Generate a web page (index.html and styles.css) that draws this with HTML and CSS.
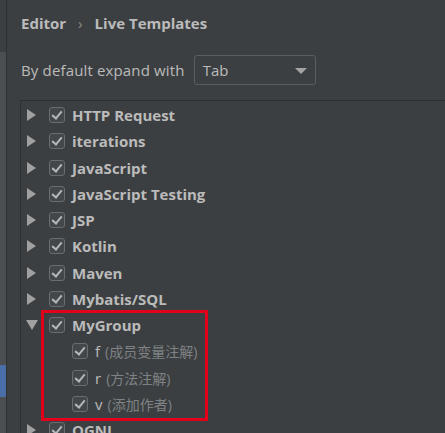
FILE: index.html
```html
<!DOCTYPE html>
<html>
<head>
<meta charset="utf-8">
<link rel="stylesheet" href="styles.css">
</head>
<body>
<div class="app">
  <div class="sidebar">
    <div class="sb-top"></div>
    <div class="sb-mid"></div>
    <div class="sb-sel"></div>
    <div class="sb-bot"></div>
  </div>
  <div class="divider"></div>
  <div class="main">
    <div class="crumbs"><span class="crumb">Editor</span><span class="sep">›</span><span class="crumb">Live Templates</span></div>
    <div class="expand">
      <span class="label">By default expand with</span>
      <div class="select"><span>Tab</span><span class="caret"></span></div>
    </div>
    <div class="tree">
      <div class="row"><span class="arrow"></span><span class="cb"></span><span class="name">HTTP Request</span></div>
      <div class="row"><span class="arrow"></span><span class="cb"></span><span class="name">iterations</span></div>
      <div class="row"><span class="arrow"></span><span class="cb"></span><span class="name">JavaScript</span></div>
      <div class="row"><span class="arrow"></span><span class="cb"></span><span class="name">JavaScript Testing</span></div>
      <div class="row"><span class="arrow"></span><span class="cb"></span><span class="name">JSP</span></div>
      <div class="row"><span class="arrow"></span><span class="cb"></span><span class="name">Kotlin</span></div>
      <div class="row"><span class="arrow"></span><span class="cb"></span><span class="name">Maven</span></div>
      <div class="row"><span class="arrow"></span><span class="cb"></span><span class="name">Mybatis/SQL</span></div>
      <div class="row"><span class="arrow open"></span><span class="cb"></span><span class="name">MyGroup</span></div>
      <div class="row child"><span class="cb"></span><span class="abbr">f</span><span class="desc">(成员变量注解)</span></div>
      <div class="row child"><span class="cb"></span><span class="abbr">r</span><span class="desc">(方法注解)</span></div>
      <div class="row child"><span class="cb"></span><span class="abbr">v</span><span class="desc">(添加作者)</span></div>
      <div class="row"><span class="arrow"></span><span class="cb"></span><span class="name">OGNL</span></div>
      <div class="highlight"></div>
    </div>
  </div>
</div>
</body>
</html>
```
FILE: styles.css
```css
html, body {
  margin: 0;
  padding: 0;
  background: #3c3f41;
  overflow: hidden;
}
body {
  width: 445px;
  height: 433px;
  font-family: "Open Sans", "Noto Sans CJK SC", sans-serif;
  color: #bbbbbb;
}
.app {
  display: flex;
  height: 433px;
}
.sidebar {
  width: 6px;
  display: flex;
  flex-direction: column;
  flex: none;
}
.sb-top { height: 52px; background: #3b3f43; flex: none; }
.sb-mid { height: 313px; background: #4b4f52; flex: none; }
.sb-sel { height: 32px; background: #4a6ea8; flex: none; }
.sb-bot { flex: 1; background: #4b4f52; }
.divider {
  width: 1px;
  background: #2e3032;
  flex: none;
}
.main {
  flex: 1;
  display: flex;
  flex-direction: column;
  min-height: 0;
}
.crumbs {
  flex: none;
  height: 46px;
  display: flex;
  align-items: center;
  padding-left: 14px;
  font-size: 15px;
  font-weight: 700;
  color: #bbbbbb;
}
.sep {
  font-weight: 400;
  color: #8c8c8c;
  margin: 0 12px;
}
.expand {
  flex: none;
  display: flex;
  align-items: center;
  padding-left: 14px;
  height: 48px;
}
.label {
  font-size: 15px;
  letter-spacing: 0.15px;
  margin-right: 9px;
}
.select {
  width: 104px;
  height: 28px;
  border: 1px solid #5b5e60;
  border-radius: 3px;
  display: flex;
  align-items: center;
  justify-content: space-between;
  padding: 0 8px;
  box-sizing: content-box;
  font-size: 15px;
}
.caret {
  width: 0;
  height: 0;
  border-left: 6px solid transparent;
  border-right: 6px solid transparent;
  border-top: 6px solid #a3a3a3;
  margin-top: 1px;
}
.tree {
  position: relative;
  flex: 1;
  min-height: 0;
  margin-top: 6px;
  margin-left: 13px;
  border-top: 1px solid #2e3032;
  border-left: 1px solid #2e3032;
  padding-top: 1px;
}
.row {
  height: 26.25px;
  display: flex;
  align-items: center;
  padding-left: 6px;
}
.arrow {
  width: 0;
  height: 0;
  border-top: 6px solid transparent;
  border-bottom: 6px solid transparent;
  border-left: 9px solid #a0a0a0;
  margin-right: 13px;
}
.arrow.open {
  border-left: 6px solid transparent;
  border-right: 6px solid transparent;
  border-top: 10px solid #a0a0a0;
  border-bottom: 0;
  margin-left: -1px;
  margin-right: 11px;
}
.cb {
  width: 14px;
  height: 14px;
  border: 1px solid #6a6d6f;
  border-radius: 3px;
  background: #43474a;
  position: relative;
  margin-right: 7px;
  flex: none;
}
.cb::after {
  content: "";
  position: absolute;
  left: 4px;
  top: 1px;
  width: 4px;
  height: 8px;
  border-right: 2px solid #b5b7b9;
  border-bottom: 2px solid #b5b7b9;
  transform: rotate(40deg);
}
.name {
  font-size: 15px;
  font-weight: 700;
  color: #bbbbbb;
}
.row.child {
  padding-left: 51px;
}
.abbr {
  font-size: 15px;
  color: #bbbbbb;
  margin-right: 5px;
}
.desc {
  font-size: 14px;
  color: #7f8285;
}
.highlight {
  position: absolute;
  left: 20px;
  top: 209px;
  width: 161px;
  height: 105px;
  border: 3px solid #e3001b;
}
```
